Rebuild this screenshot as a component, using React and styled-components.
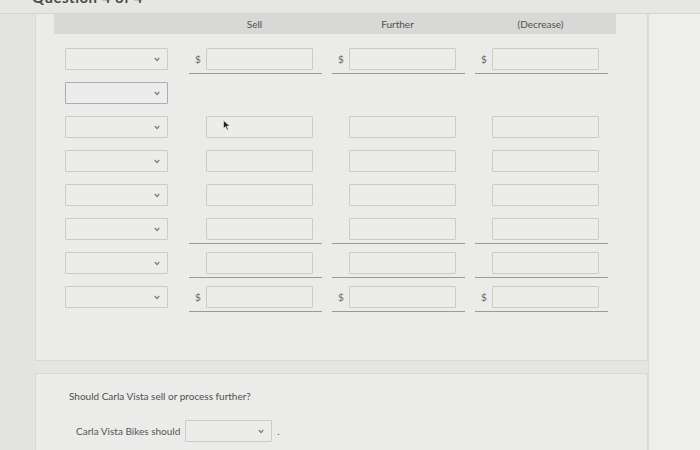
import React from "react";
import styled, { createGlobalStyle } from "styled-components";

const Global = createGlobalStyle`
  html, body { margin: 0; padding: 0; }
  body {
    width: 700px; height: 450px; overflow: hidden;
    background: #e4e4e1;
    font-family: Lato, "Open Sans", sans-serif;
    color: #505050;
  }
`;

const TopStrip = styled.div`
  height: 13px;
  overflow: hidden;
  border-bottom: 1px solid #d3d3d0;
  background: #e6e6e3;
  padding-left: 32px;
`;

const QuestionTitle = styled.div`
  margin-top: -12px;
  font-size: 15px;
  line-height: 18px;
  font-weight: 700;
  color: #4a4a4a;
  letter-spacing: 0.5px;
`;

const Main = styled.div`
  display: flex;
  height: 436px;
`;

const Gutter = styled.div`
  width: 35px;
  flex: none;
  background: #e3e3e0;
`;

const Column = styled.div`
  width: 613px;
  flex: none;
  display: flex;
  flex-direction: column;
  gap: 12px;
`;

const RightStrip = styled.div`
  flex: 1;
  background: #eeeeec;
  border-left: 1px solid #dcdcd9;
`;

const Card = styled.div`
  background: #ebebe9;
  border-left: 1px solid #d8d8d5;
  border-right: 1px solid #d8d8d5;
  border-bottom: ${(p) => (p.$open ? "none" : "1px solid #d8d8d5")};
  border-top: ${(p) => (p.$open ? "1px solid #d8d8d5" : "none")};
  padding: ${(p) => p.$pad};
  flex: ${(p) => (p.$grow ? 1 : "none")};
`;

const HeaderBar = styled.div`
  margin-left: 18px;
  width: 562px;
  height: 20px;
  background: #d8d8d6;
  display: grid;
  grid-template-columns: 114px 133px 133px 133px;
  column-gap: 10px;
  padding-left: 11px;
  box-sizing: border-box;
  align-items: center;
`;

const HeadLabel = styled.div`
  font-size: 10px;
  color: #505050;
  padding-left: 12px;
  width: 107px;
  text-align: center;
`;

const Rows = styled.div`
  margin-top: 8px;
  padding-left: 29px;
  display: grid;
  grid-template-columns: 114px 133px 133px 133px;
  grid-auto-rows: 34px;
  column-gap: 10px;
`;

const Cell = styled.div`
  position: relative;
  display: flex;
  align-items: flex-start;
  padding-top: 6px;
  box-sizing: border-box;
  border-bottom: ${(p) => (p.$total ? "1.5px solid #9a9a98" : "none")};
  height: ${(p) => (p.$total ? "32px" : "34px")};
`;

const Dollar = styled.span`
  width: 17px;
  flex: none;
  font-size: 10px;
  color: #666;
  line-height: 22px;
  padding-left: 6px;
  box-sizing: border-box;
`;

const Box = styled.div`
  position: relative;
  width: ${(p) => p.$w}px;
  height: 22px;
  box-sizing: border-box;
  border: 1px solid ${(p) => (p.$focus ? "#a8adb3" : "#cbcbc8")};
  background: #ececea;
  border-radius: 1px;
  flex: none;
`;

const Chevron = styled.svg`
  position: absolute;
  right: 7px;
  top: 8px;
  width: 6px;
  height: 5px;
`;

const Cursor = styled.svg`
  position: absolute;
  left: 16px;
  top: 3px;
  width: 8px;
  height: 11px;
`;

const Select = ({ w = 103, focus }) => (
  <Box $w={w} $focus={focus}>
    <Chevron viewBox="0 0 6 5">
      <path d="M0.8 1 L3 3.6 L5.2 1" fill="none" stroke="#777" strokeWidth="1.2" />
    </Chevron>
  </Box>
);

const Prompt = styled.div`
  font-size: 10px;
  color: #505050;
  margin-left: 33px;
`;

const AnswerLine = styled.div`
  margin-top: 18px;
  margin-left: 40px;
  display: flex;
  align-items: center;
  gap: 5px;
  font-size: 10px;
  color: #555;
`;

const rows = [
  { dollar: true, inputs: true, total: true },
  { dollar: false, inputs: false, focus: true },
  { dollar: false, inputs: true, cursor: true },
  { dollar: false, inputs: true },
  { dollar: false, inputs: true },
  { dollar: false, inputs: true, total: true },
  { dollar: false, inputs: true, total: true },
  { dollar: true, inputs: true, total: true },
];

export default function App() {
  return (
    <>
      <Global />
      <TopStrip>
        <QuestionTitle>Question 4 of 4</QuestionTitle>
      </TopStrip>
      <Main>
        <Gutter />
        <Column>
          <Card $pad="0 0 46px 0">
            <HeaderBar>
              <div />
              <HeadLabel>Sell</HeadLabel>
              <HeadLabel>Further</HeadLabel>
              <HeadLabel>(Decrease)</HeadLabel>
            </HeaderBar>
            <Rows>
              {rows.map((r, i) => (
                <React.Fragment key={i}>
                  <Cell>
                    <Select focus={r.focus} />
                  </Cell>
                  {[0, 1, 2].map((c) => (
                    <Cell key={c} $total={r.total}>
                      {r.inputs && (
                        <>
                          <Dollar>{r.dollar ? "$" : ""}</Dollar>
                          <Box $w={107}>
                            {r.cursor && c === 0 && (
                              <Cursor viewBox="0 0 8 11">
                                <path d="M0.5 0.5 L0.5 8.5 L2.6 6.6 L4 10 L5.3 9.4 L3.9 6.1 L6.8 6.1 Z" fill="#222" stroke="#eee" strokeWidth="0.6" />
                              </Cursor>
                            )}
                          </Box>
                        </>
                      )}
                    </Cell>
                  ))}
                </React.Fragment>
              ))}
            </Rows>
          </Card>
          <Card $open $grow $pad="16px 0 0 0">
            <Prompt>Should Carla Vista sell or process further?</Prompt>
            <AnswerLine>
              <span>Carla Vista Bikes should</span>
              <Select w={87} />
              <span>.</span>
            </AnswerLine>
          </Card>
        </Column>
        <RightStrip />
      </Main>
    </>
  );
}
